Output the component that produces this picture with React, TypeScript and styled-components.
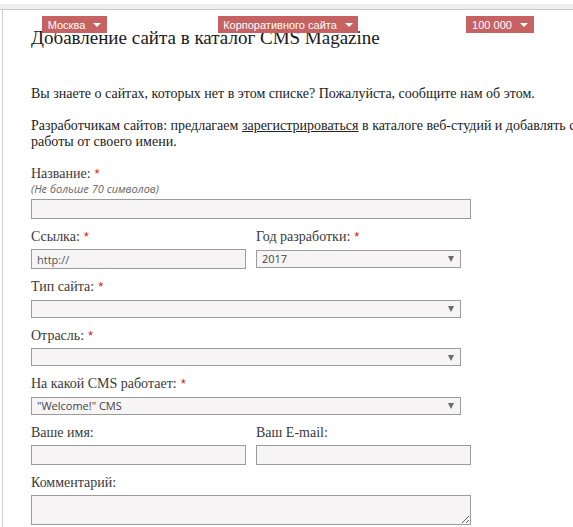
import React from "react";
import styled, { createGlobalStyle } from "styled-components";

const GlobalStyle = createGlobalStyle`
  html, body {
    margin: 0;
    padding: 0;
    background: #fff;
    overflow: hidden;
  }
  body {
    font-family: "Liberation Serif", "Times New Roman", serif;
    color: #222;
  }
`;

const Shell = styled.div`
  position: relative;
  width: 573px;
  height: 527px;
  padding-top: 4px;
  box-sizing: border-box;
  overflow: hidden;
`;

const TopStrip = styled.div`
  height: 5px;
  background: #efefef;
  border-bottom: 1px solid #c9c9c9;
`;

const Panel = styled.div`
  margin-left: 2px;
  border-left: 1px solid #cdcdcd;
  height: 100%;
  padding: 16px 0 0 28px;
  width: 618px;
  box-sizing: border-box;
`;

const Filters = styled.div`
  position: absolute;
  top: 16px;
  left: 0;
`;

const Badge = styled.div<{ $left: number; $width: number }>`
  position: absolute;
  top: 0;
  left: ${(p) => p.$left}px;
  width: ${(p) => p.$width}px;
  height: 17px;
  background: #c76262;
  color: #fff;
  font-family: "Liberation Sans", Arial, sans-serif;
  font-size: 11px;
  display: flex;
  align-items: center;
  justify-content: center;
  gap: 8px;
  white-space: nowrap;
`;

const Caret = styled.span`
  width: 0;
  height: 0;
  border-left: 4px solid transparent;
  border-right: 4px solid transparent;
  border-top: 4px solid #fff;
  margin-top: 1px;
`;

const Title = styled.h1`
  margin: 0;
  font-size: 19px;
  font-weight: normal;
  line-height: 24px;
  color: #1a1a1a;
`;

const Text = styled.p`
  margin: 36px 0 0;
  font-size: 14px;
  line-height: 16px;
  color: #222;

  & + & {
    margin-top: 16px;
  }

  a {
    color: inherit;
    text-decoration: underline;
  }
`;

const Form = styled.div`
  margin-top: 16px;
  display: flex;
  flex-direction: column;
  width: 440px;
`;

const Row = styled.div`
  display: flex;
  gap: 10px;
`;

const Field = styled.div<{ $width?: number }>`
  display: flex;
  flex-direction: column;
  width: ${(p) => (p.$width ? `${p.$width}px` : "auto")};
  margin-bottom: 10px;
`;

const Label = styled.div`
  font-size: 14px;
  line-height: 16px;
  color: #3a3a3a;
  margin-bottom: 4px;
`;

const Required = styled.span`
  color: #cc1a1a;
  font-family: "Liberation Sans", Arial, sans-serif;
  font-size: 13px;
  margin-left: 4px;
`;

const Hint = styled.div`
  font-family: "Open Sans", "Noto Sans", sans-serif;
  font-style: italic;
  font-size: 11px;
  line-height: 13px;
  color: #666;
  margin: -4px 0 4px;
`;

const TextInput = styled.input<{ $width: number }>`
  box-sizing: border-box;
  width: ${(p) => p.$width}px;
  height: 20px;
  border: 1px solid #9c9c9c;
  background: #f6f4f5;
  padding: 0 5px;
  font-family: "Open Sans", "Noto Sans", sans-serif;
  font-size: 11px;
  color: #555;
  outline: none;
`;

const SelectWrap = styled.div<{ $width: number }>`
  position: relative;
  width: ${(p) => p.$width}px;

  &::after {
    content: "";
    position: absolute;
    right: 7px;
    top: 7px;
    border-left: 3.5px solid transparent;
    border-right: 3.5px solid transparent;
    border-top: 6px solid #6a6a6a;
    pointer-events: none;
  }
`;

const Select = styled.select`
  appearance: none;
  box-sizing: border-box;
  width: 100%;
  height: 18px;
  border: 1px solid #9c9c9c;
  border-radius: 0;
  background: #f6f4f5;
  padding: 0 5px;
  font-family: "Open Sans", "Noto Sans", sans-serif;
  font-size: 11px;
  color: #444;
  outline: none;
`;

const Comment = styled.textarea`
  box-sizing: border-box;
  width: 440px;
  height: 30px;
  border: 1px solid #9c9c9c;
  background: #f6f4f5;
  padding: 2px 5px;
  outline: none;
  font-family: "Open Sans", "Noto Sans", sans-serif;
  font-size: 11px;
`;

const filters = [
  { label: "Москва", left: 42, width: 65 },
  { label: "Корпоративного сайта", left: 218, width: 140 },
  { label: "100 000", left: 466, width: 68 },
];

function Choice({ width, value = "" }: { width: number; value?: string }) {
  return (
    <SelectWrap $width={width}>
      <Select defaultValue={value}>
        <option value={value}>{value}</option>
      </Select>
    </SelectWrap>
  );
}

export default function App() {
  return (
    <Shell>
      <GlobalStyle />
      <TopStrip />
      <Panel>
        <Title>Добавление сайта в каталог CMS Magazine</Title>
        <Text>
          Вы знаете о сайтах, которых нет в этом списке? Пожалуйста, сообщите
          нам об этом.
        </Text>
        <Text>
          Разработчикам сайтов: предлагаем <a href="#">зарегистрироваться</a> в
          каталоге веб-студий и добавлять свои работы от своего имени.
        </Text>

        <Form>
          <Field>
            <Label>
              Название:<Required>*</Required>
            </Label>
            <Hint>(Не больше 70 символов)</Hint>
            <TextInput $width={440} />
          </Field>

          <Row>
            <Field $width={215}>
              <Label>
                Ссылка:<Required>*</Required>
              </Label>
              <TextInput $width={215} defaultValue="http://" />
            </Field>
            <Field $width={215}>
              <Label>
                Год разработки:<Required>*</Required>
              </Label>
              <Choice width={205} value="2017" />
            </Field>
          </Row>

          <Field>
            <Label>
              Тип сайта:<Required>*</Required>
            </Label>
            <Choice width={430} />
          </Field>

          <Field>
            <Label>
              Отрасль:<Required>*</Required>
            </Label>
            <Choice width={430} />
          </Field>

          <Field>
            <Label>
              На какой CMS работает:<Required>*</Required>
            </Label>
            <Choice width={430} value={'"Welcome!" CMS'} />
          </Field>

          <Row>
            <Field $width={215}>
              <Label>Ваше имя:</Label>
              <TextInput $width={215} />
            </Field>
            <Field $width={215}>
              <Label>Ваш E-mail:</Label>
              <TextInput $width={215} />
            </Field>
          </Row>

          <Field>
            <Label>Комментарий:</Label>
            <Comment />
          </Field>
        </Form>
      </Panel>

      <Filters>
        {filters.map((f) => (
          <Badge key={f.label} $left={f.left} $width={f.width}>
            {f.label}
            <Caret />
          </Badge>
        ))}
      </Filters>
    </Shell>
  );
}
